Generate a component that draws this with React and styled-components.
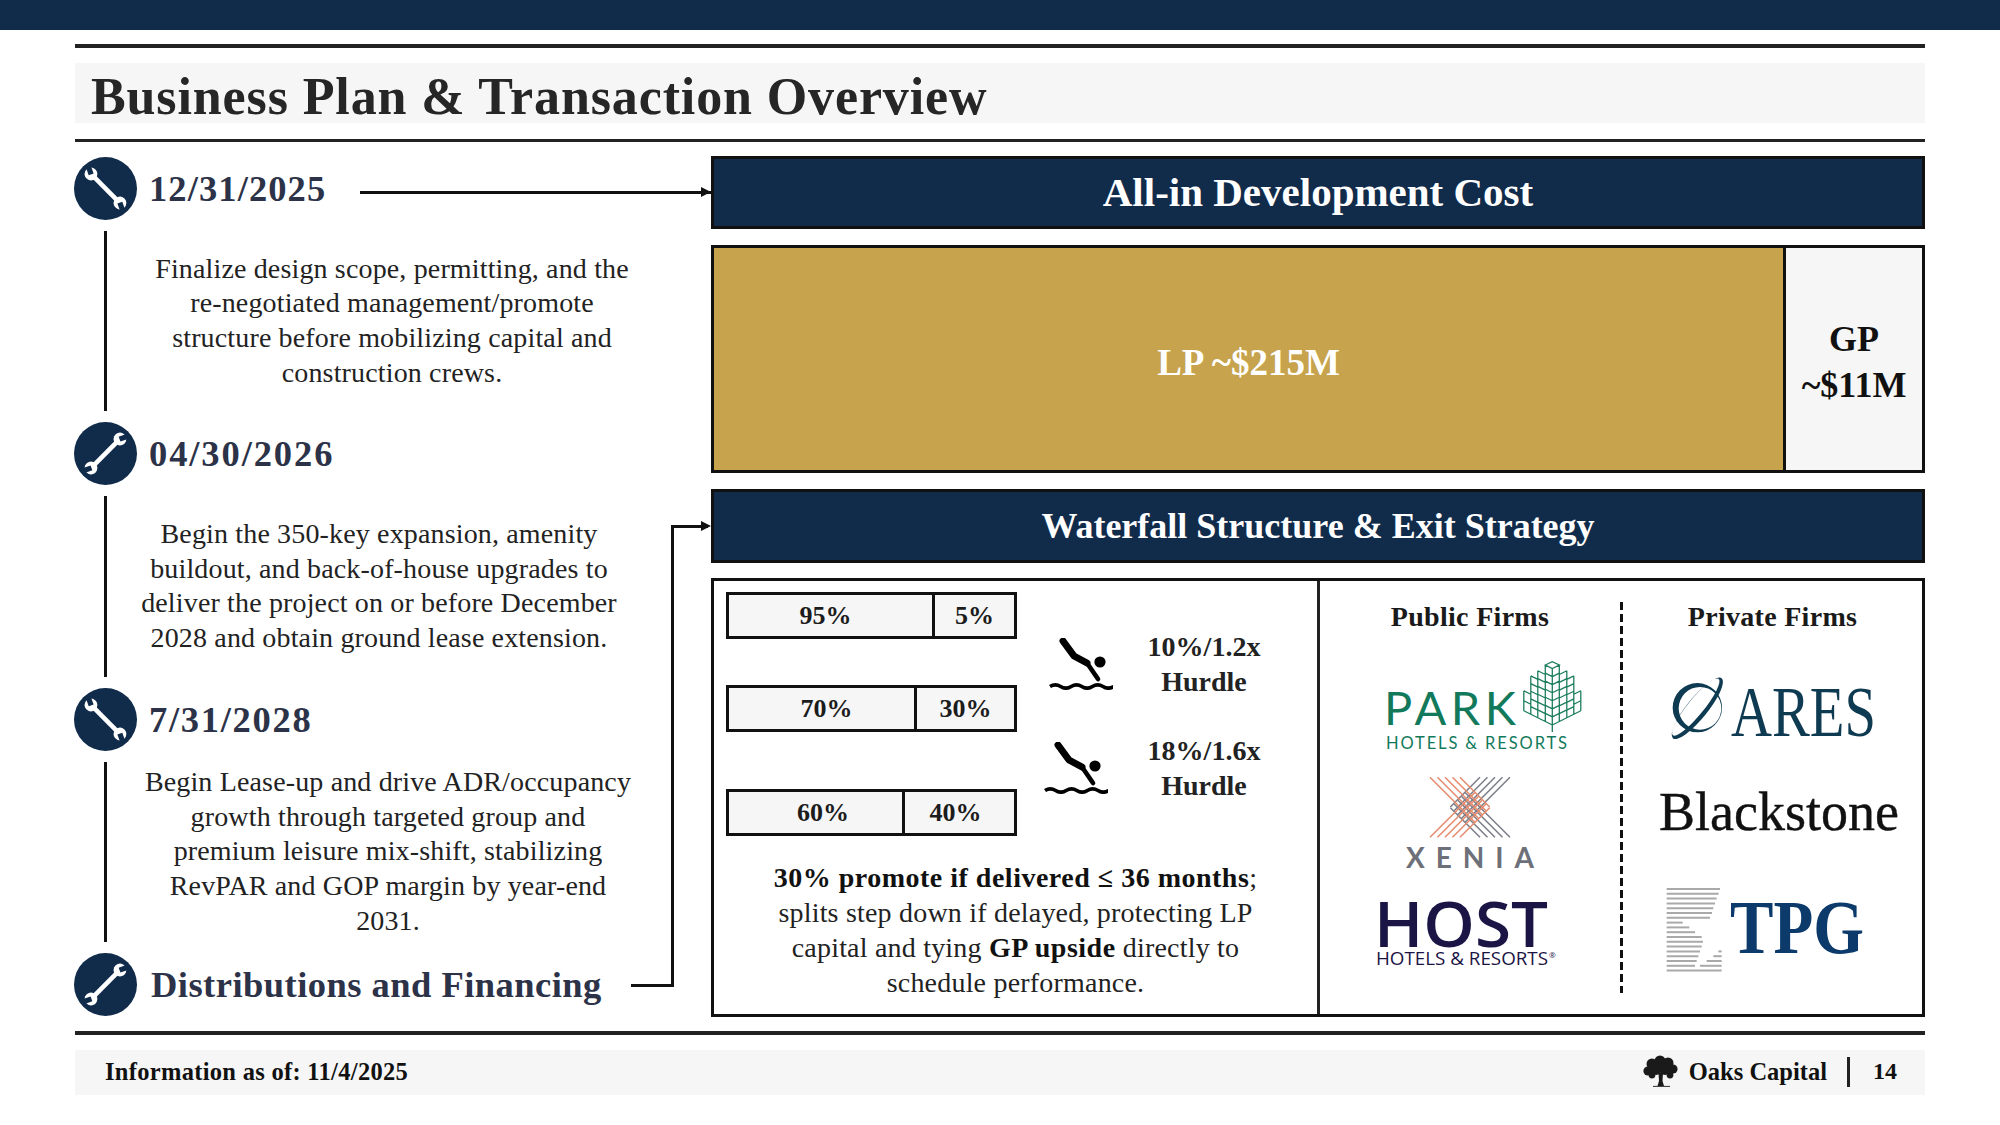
import styled, {createGlobalStyle} from "styled-components";

const navy = "#112b4b";
const serif = `"Liberation Serif", "Times New Roman", serif`;

const GlobalStyle = createGlobalStyle`
  html, body {
    margin: 0;
    padding: 0;
    background: #ffffff;
    width: 2000px;
    height: 1125px;
    overflow: hidden;
  }
  * {
    box-sizing: border-box;
  }
`;

const Slide = styled.div`
  width: 2000px;
  height: 1125px;
  font-family: ${serif};
  color: #1c1c1c;
`;

const TopBar = styled.div`
  height: 30px;
  background: ${navy};
`;

const Content = styled.div`
  padding: 14px 75px 0 75px;
`;

const Rule = styled.div`
  height: ${props => props.$h}px;
  background: #222222;
`;

const TitleBar = styled.div`
  height: 60px;
  margin: 15px 0 16px 0;
  padding-left: 16px;
  background: #f6f6f6;
  font-size: 52px;
  line-height: 68px;
  font-weight: bold;
  color: #262626;
  letter-spacing: 0.88px;
`;

const Main = styled.div`
  display: flex;
  height: 861px;
  margin: 14px 0;
`;

const Timeline = styled.div`
  position: relative;
  width: 636px;
  padding-top: 1px;
`;

const StepRow = styled.div`
  display: flex;
  align-items: center;
  height: 63px;
  margin-left: -1px;
`;

const StepIcon = styled.div`
  flex: none;
  width: 63px;
  height: 63px;
  border-radius: 50%;
  background: ${navy};
`;

const StepLabel = styled.div`
  margin-left: ${props => props.$gap || 12}px;
  font-size: 36.5px;
  font-weight: bold;
  color: #2c3248;
  white-space: nowrap;
  letter-spacing: ${props => props.$track || 0}px;
`;

const Arrow = styled.div`
  position: relative;
  flex: 1;
  height: 3px;
  margin: 7px 0 0 34px;
  background: #111111;

  &::after {
    content: "";
    position: absolute;
    right: 0;
    top: -4px;
    border-left: 10px solid #111111;
    border-top: 5.5px solid transparent;
    border-bottom: 5.5px solid transparent;
  }
`;

const StepBody = styled.div`
  display: flex;
  height: 202.3px;
  padding: 11px 0 11px 29px;
`;

const StepLine = styled.div`
  flex: none;
  width: 3px;
  background: #111111;
`;

const Copy = styled.div`
  align-self: center;
  width: ${props => props.$width}px;
  font-size: 28px;
  letter-spacing: 0.15px;
  line-height: 34.7px;
  text-align: center;
  white-space: nowrap;
  color: #222222;
`;

const Elbow = styled.div`
  position: absolute;
  left: 556px;
  top: 369px;
  width: 43px;
  height: 462px;
  border-right: 3px solid #111111;
  border-bottom: 3px solid #111111;

  &::before {
    content: "";
    position: absolute;
    left: 100%;
    top: 0;
    width: 37px;
    height: 3px;
    background: #111111;
  }

  &::after {
    content: "";
    position: absolute;
    left: calc(100% + 30px);
    top: -4px;
    border-left: 10px solid #111111;
    border-top: 5.5px solid transparent;
    border-bottom: 5.5px solid transparent;
  }
`;

const RightColumn = styled.div`
  flex: 1;
  display: flex;
  flex-direction: column;
`;

const SectionBar = styled.div`
  height: ${props => props.$h}px;
  margin-bottom: ${props => props.$after}px;
  border: 3px solid #111111;
  background: ${navy};
  color: #ffffff;
  font-size: ${props => props.$size}px;
  font-weight: bold;
  text-align: center;
  line-height: ${props => props.$h - 6}px;
`;

const CapitalStack = styled.div`
  display: flex;
  height: 228px;
  margin-bottom: 16px;
  border: 3px solid #111111;
`;

const LpShare = styled.div`
  width: 1069px;
  display: flex;
  align-items: center;
  justify-content: center;
  padding-top: 7px;
  background: #c6a34c;
  color: #ffffff;
  font-size: 37px;
  font-weight: bold;
`;

const GpShare = styled.div`
  flex: 1;
  display: flex;
  flex-direction: column;
  align-items: center;
  justify-content: center;
  padding-top: 5px;
  border-left: 3px solid #111111;
  background: #f6f6f6;
  color: #111111;
  font-size: 36px;
  line-height: 46px;
  font-weight: bold;
`;

const DetailBox = styled.div`
  flex: 1;
  display: flex;
  border: 3px solid #111111;
`;

const WaterfallPane = styled.div`
  width: 606px;
  padding: 11px 0 0 12px;
  border-right: 3px solid #222222;
`;

const TierGrid = styled.div`
  display: flex;
  height: 246px;
`;

const SplitColumn = styled.div`
  width: 291px;
`;

const SplitBar = styled.div`
  display: flex;
  height: 47px;
  margin-bottom: ${props => props.$after || 0}px;
  border: 3px solid #111111;
  background: #f6f6f6;
  font-size: 26px;
  font-weight: bold;
  line-height: 41px;
  text-align: center;
`;

const SplitCell = styled.div`
  width: ${props => props.$width}px;
  padding: ${props => props.$pad || "0"};
  border-right: ${props => props.$last ? "none" : "3px solid #111111"};
  flex: ${props => props.$last ? 1 : "none"};
`;

const HurdleColumn = styled.div`
  padding: 37px 0 0 27px;
`;

const Hurdle = styled.div`
  display: grid;
  grid-template-columns: 95px 130px;
  align-items: center;
  height: 70px;
  margin-bottom: 34px;
`;

const DiveIcon = styled.svg`
  display: block;
  width: 64px;
  height: 52px;
  margin-left: ${props => props.$indent || 0}px;
`;

const HurdleText = styled.div`
  font-size: 28px;
  line-height: 35px;
  font-weight: bold;
  text-align: center;
  color: #222222;
  white-space: nowrap;
`;

const PromoteCopy = styled.div`
  margin: 22px 0 0 -12px;
  font-size: 28px;
  letter-spacing: 0.2px;
  line-height: 35px;
  text-align: center;
  white-space: nowrap;
  color: #222222;

  b {
    color: #111111;
    letter-spacing: 0.5px;
  }
`;

const FirmsPane = styled.div`
  flex: 1;
  display: grid;
  grid-template-columns: 300px 1fr;
  padding: 21px 0;
`;

const FirmColumn = styled.div`
  display: flex;
  flex-direction: column;
  padding-left: ${props => props.$divided ? 3 : 0}px;
  background-image: ${props => props.$divided ? "linear-gradient(#111111 8px, transparent 8px)" : "none"};
  background-size: 3px 12px;
  background-repeat: repeat-y;
`;

const FirmHeading = styled.div`
  height: 30px;
  font-size: 28px;
  letter-spacing: 0.3px;
  line-height: 30px;
  font-weight: bold;
  text-align: center;
  color: #1a1a1a;
`;

const LogoSvg = styled.svg`
  display: block;
  flex: none;
  width: 100%;
  height: ${props => props.$h}px;
  margin-top: ${props => props.$top}px;
  overflow: visible;
`;

const LogoText = styled.text`
  font-family: ${props => props.$font || serif};
  font-size: ${props => props.$size}px;
  font-weight: ${props => props.$weight || 400};
  fill: ${props => props.$color};
`;

const BlackstoneLogo = styled.div`
  height: 55px;
  margin: 40px 0 0 36px;
  font-size: 54px;
  line-height: 55px;
  color: #111111;
  -webkit-text-stroke: 0.4px #111111;
`;

const Footer = styled.div`
  display: flex;
  align-items: center;
  height: 45px;
  margin-top: 15px;
  padding: 0 28px 2px 30px;
  background: #f6f6f6;
  color: #111111;
  font-weight: bold;
`;

const AsOf = styled.div`
  flex: 1;
  font-size: 24.5px;
  letter-spacing: 0.3px;
`;

const Brand = styled.div`
  font-size: 24.5px;
  margin-left: 11px;
`;

const FooterSep = styled.div`
  width: 3px;
  height: 30px;
  margin: 0 23px 0 20px;
  background: #222222;
`;

const PageNum = styled.div`
  font-size: 24px;
`;

const Wrench = ({flip}) => (
    <svg width="63" height="63" viewBox="-31.5 -31.5 63 63">
        <g transform={`rotate(${flip ? 45 : -45})`}>
            <rect x="-2.3" y="-17" width="4.6" height="34" fill="#ffffff"/>
            {[0, 180].map(turn => (
                <g key={turn} transform={`rotate(${turn}) rotate(25 0 -20.5)`}>
                    <circle cx="0" cy="-20.5" r="6.4" fill="#ffffff"/>
                    <rect x="-2.6" y="-28" width="5.2" height="8" fill={navy}/>
                </g>
            ))}
        </g>
    </svg>
);

const Diver = ({indent}) => (
    <DiveIcon $indent={indent} viewBox="9 13 64 52">
        <path d="M23 16 L34 31 L47 38" fill="none" stroke="#000" strokeWidth="7" strokeLinecap="round" strokeLinejoin="round"/>
        <path d="M47 38 L58 54" fill="none" stroke="#000" strokeWidth="4.6" strokeLinecap="round"/>
        <circle cx="60" cy="37" r="5.6" fill="#000"/>
        <path d="M10 61.5 q5.3 -3.4 10.6 0 t10.6 0 t10.6 0 t10.6 0 t10.6 0 t10.6 0" fill="none" stroke="#000" strokeWidth="3.6"/>
    </DiveIcon>
);

// pine mark from the park logo, mirrored strips that meet at the trunk
const treeColumns = [
    {from: 0, to: 7, top: 18.5},
    {from: 7, to: 14.5, top: 28},
    {from: 14.5, to: 21.5, top: 36.7},
    {from: 21.5, to: 28.5, top: 55},
];

const treePath = () => {
    const cx = 42.3;
    const bottom = 75;
    let d = "";
    treeColumns.forEach(({from, to, top}) => {
        [-1, 1].forEach(side => {
            const x1 = cx + side * from;
            const x2 = cx + side * to;
            const edge = (x, base) => base - 0.5 * Math.abs(x - cx);
            d += `M${x1} ${edge(x1, top)} L${x1} ${edge(x1, bottom)} M${x2} ${edge(x2, top)} L${x2} ${edge(x2, bottom)} `;
            for (let base = top; base <= bottom + 0.1; base += (bottom - top) / Math.round((bottom - top) / 8.5)) {
                d += `M${x1} ${edge(x1, base)} L${x2} ${edge(x2, base)} `;
            }
        });
    });
    d += `M${cx} 75 L${cx} 82 M35.3 15 L42.3 11.7 L49.3 15 L42.3 18.5 Z `;
    return d;
};

const xeniaLines = () => {
    const lines = [];
    for (let i = 0; i < 5; i++) {
        const a = 30 + i * 22.5;
        const diff = a - 22;
        const sum = a + 202;
        lines.push({x1: a, y1: 22, x2: (diff + 320) / 2, y2: (320 - diff) / 2});
        lines.push({x1: a, y1: 202, x2: (sum + 96) / 2, y2: (sum - 96) / 2});
    }
    return lines;
};

const ParkLogo = () => (
    <LogoSvg $h={100} $top={23}>
        <LogoText x="64" y="70" $font="Lato, sans-serif" $size={47} $color="#127a5b" textLength="132">PARK</LogoText>
        <LogoText x="66" y="94" $font="Lato, sans-serif" $size={16.5} $color="#127a5b" textLength="181">HOTELS &amp; RESORTS</LogoText>
        <path transform="translate(190 -5)" d={treePath()} fill="none" stroke="#1c7d5d" strokeWidth="1.3"/>
    </LogoSvg>
);

const XeniaLogo = () => (
    <LogoSvg $h={97} $top={20}>
        <g transform="translate(100 -5) scale(0.3333)" strokeWidth="4.5">
            {xeniaLines().map((l, i) => (
                <line key={i} x1={300 - l.x1} y1={l.y1} x2={300 - l.x2} y2={l.y2} stroke="#7b7d88"/>
            ))}
            {xeniaLines().map((l, i) => (
                <line key={i} x1={l.x1} y1={l.y1} x2={l.x2} y2={l.y2} stroke="#e58a6c"/>
            ))}
        </g>
        <LogoText x="86" y="93" $font="Lato, sans-serif" $size={28} $weight={700} $color="#6e7079" textLength="128">XENIA</LogoText>
    </LogoSvg>
);

const HostLogo = () => (
    <LogoSvg $h={72} $top={26}>
        <LogoText x="54" y="49" $font={`"Open Sans", sans-serif`} $size={64} $weight={600} $color="#1b1545" textLength="174" lengthAdjust="spacingAndGlyphs">HOST</LogoText>
        <LogoText x="56" y="67" $font={`"Open Sans", sans-serif`} $size={18} $color="#1b1545" textLength="172" lengthAdjust="spacingAndGlyphs">HOTELS &amp; RESORTS</LogoText>
        <LogoText x="229" y="60" $font={`"Open Sans", sans-serif`} $size={8} $color="#1b1545">®</LogoText>
    </LogoSvg>
);

const AresLogo = () => (
    <LogoSvg $h={75} $top={38}>
        <g transform="translate(37 0) scale(0.3333)" fill="#0e3a52" fillRule="evenodd">
            <path d="M38 113 a74 74 0 1 0 148 0 a74 74 0 1 0 -148 0 Z M56 115 a64 64 0 1 0 128 0 a64 64 0 1 0 -128 0 Z"/>
            <g transform="rotate(-51 112 115)">
                <path d="M-4 115 a116 31 0 1 0 232 0 a116 31 0 1 0 -232 0 Z M3 109 a109 24 0 1 0 218 0 a109 24 0 1 0 -218 0 Z"/>
            </g>
        </g>
        <LogoText x="108" y="66" $size={72} $color="#0e3a52" textLength="145" lengthAdjust="spacingAndGlyphs">ARES</LogoText>
    </LogoSvg>
);

// stripe ends of the tpg mark, [first run end, second run start]
const tpgStripes = [
    [180], [176], [170], [165], [160], [156], [150], [68], [88], [105], [125], [129],
    [125], [120, 175], [115, 160], [110, 140], [105, 120], [185],
];

const TpgLogo = () => (
    <LogoSvg $h={90} $top={45}>
        <g transform="translate(37 -5) scale(0.3333)" stroke="#a9a9a9" strokeWidth="6">
            {tpgStripes.map(([end, second], i) => {
                const y = 27 + i * 14.4;
                return (
                    <g key={i}>
                        <line x1="20" y1={y} x2={end} y2={y}/>
                        {second && <line x1={second} y1={y} x2="185" y2={y}/>}
                    </g>
                );
            })}
        </g>
        <LogoText x="107" y="68" $size={76} $weight={700} $color="#0b3a6b" textLength="134" lengthAdjust="spacingAndGlyphs">TPG</LogoText>
    </LogoSvg>
);

const OakTree = () => (
    <svg width="35" height="33" viewBox="0 0 35 33">
        <g fill="#1a1a1a">
            <circle cx="9" cy="9" r="5.5"/>
            <circle cx="17" cy="6" r="5.5"/>
            <circle cx="25" cy="8" r="5.5"/>
            <circle cx="30" cy="14" r="4.6"/>
            <circle cx="5" cy="16" r="4.6"/>
            <circle cx="13" cy="14" r="6"/>
            <circle cx="22" cy="14" r="6"/>
            <circle cx="9" cy="20" r="3.4"/>
            <circle cx="27" cy="20" r="3.4"/>
            <path d="M15.5 18 L20 18 L19.5 26 L21 31 L14.5 31 L16 26 Z"/>
            <path d="M10 31.4 L27 31.4" stroke="#1a1a1a" strokeWidth="0.9"/>
        </g>
    </svg>
);

const Step = ({label, flip, width, gap, track, arrow, children}) => (
    <>
        <StepRow>
            <StepIcon><Wrench flip={flip}/></StepIcon>
            <StepLabel $gap={gap} $track={track}>{label}</StepLabel>
            {arrow && <Arrow/>}
        </StepRow>
        {children && (
            <StepBody>
                <StepLine/>
                <Copy $width={width}>{children}</Copy>
            </StepBody>
        )}
    </>
);

const App = () => {
    return (
        <Slide>
            <GlobalStyle/>
            <TopBar/>
            <Content>
                <Rule $h={4}/>
                <TitleBar>Business Plan &amp; Transaction Overview</TitleBar>
                <Rule $h={3}/>
                <Main>
                    <Timeline>
                        <Step label="12/31/2025" width={570} arrow track={1.1}>
                            Finalize design scope, permitting, and the<br/>
                            re-negotiated management/promote<br/>
                            structure before mobilizing capital and<br/>
                            construction crews.
                        </Step>
                        <Step label="04/30/2026" flip width={544} track={1.9}>
                            Begin the 350-key expansion, amenity<br/>
                            buildout, and back-of-house upgrades to<br/>
                            deliver the project on or before December<br/>
                            2028 and obtain ground lease extension.
                        </Step>
                        <Step label="7/31/2028" width={562} track={1.7}>
                            Begin Lease-up and drive ADR/occupancy<br/>
                            growth through targeted group and<br/>
                            premium leisure mix-shift, stabilizing<br/>
                            RevPAR and GOP margin by year-end<br/>
                            2031.
                        </Step>
                        <Step label="Distributions and Financing" flip gap={14} track={0.47}/>
                        <Elbow/>
                    </Timeline>
                    <RightColumn>
                        <SectionBar $h={73} $after={16} $size={41}>All-in Development Cost</SectionBar>
                        <CapitalStack>
                            <LpShare>LP ~$215M</LpShare>
                            <GpShare>
                                <div>GP</div>
                                <div>~$11M</div>
                            </GpShare>
                        </CapitalStack>
                        <SectionBar $h={74} $after={15} $size={36}>Waterfall Structure &amp; Exit Strategy</SectionBar>
                        <DetailBox>
                            <WaterfallPane>
                                <TierGrid>
                                    <SplitColumn>
                                        <SplitBar $after={46}>
                                            <SplitCell $width={206} $pad="0 10px 0 0">95%</SplitCell>
                                            <SplitCell $last>5%</SplitCell>
                                        </SplitBar>
                                        <SplitBar $after={57}>
                                            <SplitCell $width={188} $pad="0 0 0 10px">70%</SplitCell>
                                            <SplitCell $last>30%</SplitCell>
                                        </SplitBar>
                                        <SplitBar>
                                            <SplitCell $width={176} $pad="0 0 0 15px">60%</SplitCell>
                                            <SplitCell $last $pad="0 8px 0 0">40%</SplitCell>
                                        </SplitBar>
                                    </SplitColumn>
                                    <HurdleColumn>
                                        <Hurdle>
                                            <Diver indent={5}/>
                                            <HurdleText>10%/1.2x<br/>Hurdle</HurdleText>
                                        </Hurdle>
                                        <Hurdle>
                                            <Diver/>
                                            <HurdleText>18%/1.6x<br/>Hurdle</HurdleText>
                                        </Hurdle>
                                    </HurdleColumn>
                                </TierGrid>
                                <PromoteCopy>
                                    <b>30% promote if delivered ≤ 36 months</b>;<br/>
                                    splits step down if delayed, protecting LP<br/>
                                    capital and tying <b>GP upside</b> directly to<br/>
                                    schedule performance.
                                </PromoteCopy>
                            </WaterfallPane>
                            <FirmsPane>
                                <FirmColumn>
                                    <FirmHeading>Public Firms</FirmHeading>
                                    <ParkLogo/>
                                    <XeniaLogo/>
                                    <HostLogo/>
                                </FirmColumn>
                                <FirmColumn $divided>
                                    <FirmHeading>Private Firms</FirmHeading>
                                    <AresLogo/>
                                    <BlackstoneLogo>Blackstone</BlackstoneLogo>
                                    <TpgLogo/>
                                </FirmColumn>
                            </FirmsPane>
                        </DetailBox>
                    </RightColumn>
                </Main>
                <Rule $h={4}/>
                <Footer>
                    <AsOf>Information as of: 11/4/2025</AsOf>
                    <OakTree/>
                    <Brand>Oaks Capital</Brand>
                    <FooterSep/>
                    <PageNum>14</PageNum>
                </Footer>
            </Content>
        </Slide>
    );
};

export default App;
